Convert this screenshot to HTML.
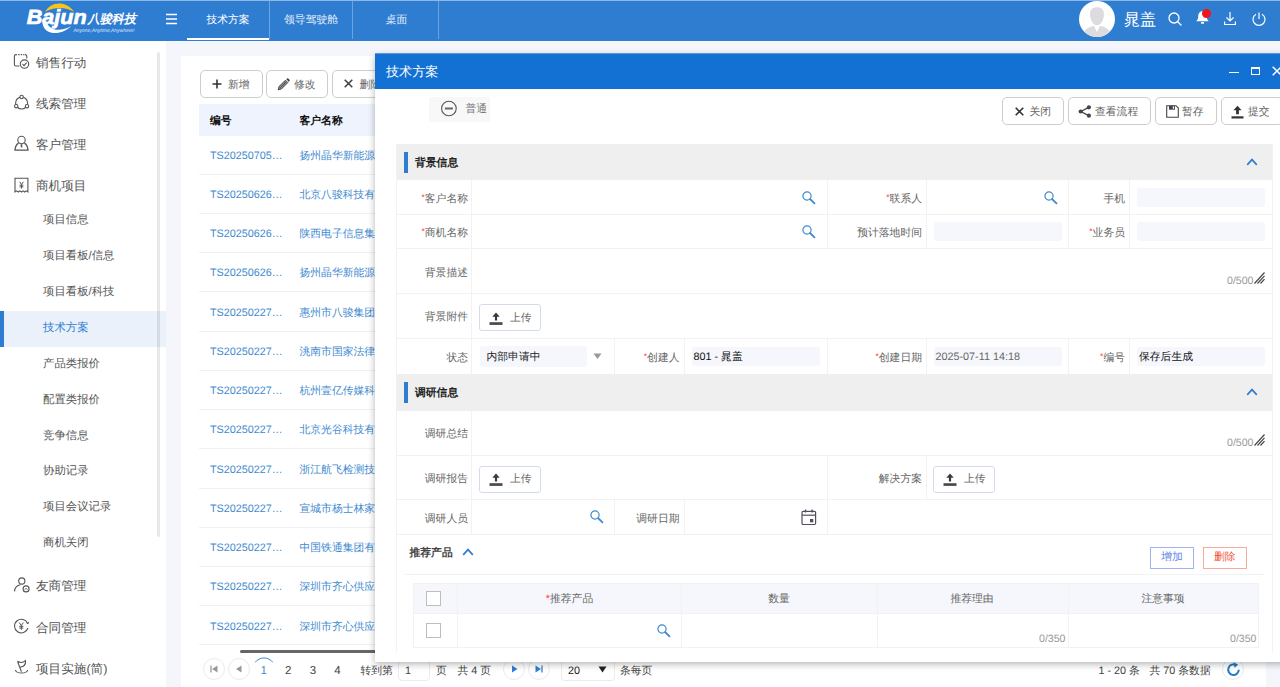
<!DOCTYPE html>
<html><head><meta charset="utf-8">
<style>
*{box-sizing:border-box;margin:0;padding:0}
html,body{text-rendering:geometricPrecision;width:1280px;height:687px;overflow:hidden;background:#f4f6fc;font-family:"Liberation Sans",sans-serif;font-size:12px;color:#555}
.abs{position:absolute}
#hdr{position:absolute;left:0;top:0;width:1280px;height:41px;background:#2f7dd1;border-top:1px solid #8db7e6}
.tab{position:absolute;top:0;height:38px;line-height:38px;text-align:center;color:#fff;font-size:10.8px;border-right:1px solid #6fa3dc}
#side{position:absolute;left:0;top:41px;width:166px;height:646px;background:#fff}
.m1{position:absolute;left:36px;font-size:12.6px;color:#555;white-space:nowrap;height:20px;line-height:20px}
.m2{position:absolute;left:43px;font-size:11.4px;color:#555;white-space:nowrap;height:20px;line-height:20px}
.ico{position:absolute;left:13px}
#card{position:absolute;left:181px;top:56px;width:1085px;height:640px;background:#fff}
.btn{position:absolute;height:28px;border:1px solid #cdcdcd;border-radius:5px;background:#fff;color:#666;font-size:10.8px;line-height:28px;white-space:nowrap}
.th{position:absolute;font-weight:bold;color:#111;font-size:10.8px;top:114.2px;line-height:14px;white-space:nowrap}
.row{position:absolute;left:199px;width:1081px;height:39.23px;border-bottom:1px solid #f0f1f4}
.row span{position:absolute;top:13.3px;line-height:15px;color:#3f8bd0;font-size:10.8px;white-space:nowrap}
#modal{position:absolute;left:375px;top:54px;width:920px;height:608px;background:#fff;box-shadow:0 2px 7px rgba(0,0,0,.3)}
#mtitle{position:absolute;left:0;top:0;width:100%;height:36px;background:#1371d4;color:#fff;font-size:13.5px;line-height:36px;padding-left:10px}
.sec{position:absolute;left:21px;width:875px;height:36px;background:#efefef;font-weight:bold;color:#222;font-size:11.5px;line-height:36px;padding-left:18px}
.sec:before{content:"";position:absolute;left:7px;top:7px;width:4px;height:22px;background:#2f7dd1}
.hl{position:absolute;left:21px;width:875px;height:1px;background:#ececec}
.vl{position:absolute;width:1px;background:#ececec}
.lb{position:absolute;text-align:right;color:#666;font-size:10.8px;line-height:16px;white-space:nowrap}
.lb i{color:#f33;font-style:normal;font-size:8.5px;position:relative;top:-2px}
.inp{position:absolute;height:19px;background:#f5f7fd;border-radius:3px;font-size:10.8px;color:#222;line-height:21px;padding-left:2px;white-space:nowrap}
</style></head><body>
<div id="hdr">
<svg class="abs" style="left:0;top:-1px" width="160" height="41" viewBox="0 0 160 41">
<path d="M45 12 C50 3 64 -1.200 74.300 11.800 C65 6.200 53 7 45 12 Z" fill="#f9c416"/>
<path d="M42.5 23.2 C44 35.5 62 36 71 26 C62 31.5 51 31.5 47 23.2 Z" fill="#fff"/>
<text x="26.700" y="23.500" font-family="Liberation Sans" font-weight="bold" font-style="italic" font-size="20.500" fill="#fff" stroke="#fff" stroke-width="0.7" textLength="60" lengthAdjust="spacingAndGlyphs">Bajun</text>
<text x="87.500" y="23" font-family="Liberation Sans, sans-serif" font-weight="bold" font-style="italic" font-size="12.500" fill="#fff" textLength="48.500" lengthAdjust="spacingAndGlyphs">八骏科技</text>
<text x="73.5" y="32" font-family="Liberation Sans" font-style="italic" font-size="5" fill="#dbe8f7" textLength="61" lengthAdjust="spacingAndGlyphs">Anyone,Anytime,Anywhere!</text>
</svg>
<svg class="abs" style="left:165px;top:12px" width="13" height="12" viewBox="0 0 13 12"><path d="M1 1.5h11M1 6h11M1 10.5h11" stroke="#fff" stroke-width="1.4" fill="none"/></svg>
<div class="tab" style="left:187px;width:83px;border-bottom:0">技术方案</div>
<div class="abs" style="left:187px;top:37px;width:82px;height:2px;background:#fff"></div>
<div class="tab" style="left:270px;width:83px;color:#e6effa">领导驾驶舱</div>
<div class="tab" style="left:353px;width:86px;color:#e6effa;padding-left:2px">桌面</div>
<div class="abs" style="left:1078.6px;top:0px;width:36px;height:36px;border-radius:50%;background:#fff;overflow:hidden">
<svg width="36" height="36" viewBox="0 0 36 36"><path d="M18 6.300c4.400 0 7 2.600 7 7 0 4.500-2.600 11-7 11s-7-6.500-7-11c0-4.400 2.600-7 7-7z" fill="#dcdbe0"/><path d="M4 36c.5-8 5-10.500 14-11.500 9 1 13.500 3.500 14 11.500z" fill="#dcdbe0"/><path d="M14.600 24.200L18 31l3.400-6.800z" fill="#fff"/></svg></div>
<div class="abs" style="left:1124px;top:8.7px;color:#fff;font-size:16.100px;line-height:20px">晁盖</div>
<svg class="abs" style="left:1166.5px;top:10.3px" width="16" height="16" viewBox="0 0 16 16"><circle cx="7" cy="7" r="5" stroke="#fff" stroke-width="1.3" fill="none"/><path d="M10.7 10.7L14 14" stroke="#fff" stroke-width="1.3" stroke-linecap="round"/></svg>
<svg class="abs" style="left:1193.5px;top:8.2px" width="17" height="17" viewBox="0 0 16 16"><path d="M8 2 C5 2 4 4.5 4 7 C4 9.5 3 10.5 2 11.5 L14 11.5 C13 10.5 12 9.5 12 7 C12 4.5 11 2 8 2 Z" fill="#fff"/><rect x="6.5" y="12.3" width="3" height="1.5" rx=".7" fill="#fff"/></svg>
<div class="abs" style="left:1201.600px;top:7.700px;width:9px;height:9px;border-radius:50%;background:#f0151c"></div>
<svg class="abs" style="left:1222px;top:9.3px" width="16" height="16" viewBox="0 0 16 16"><path d="M8 2V11M4.500 7.500L8 11L11.500 7.500M2.600 11.500V14.500H13.400V11.500" stroke="#fff" stroke-width="1.2" fill="none"/></svg>
<svg class="abs" style="left:1251px;top:9.5px" width="16" height="16" viewBox="0 0 16 16"><path d="M5 3.2A6 6 0 1 0 11 3.2" stroke="#fff" stroke-width="1.2" fill="none"/><path d="M8 1.5V8" stroke="#fff" stroke-width="1.2"/></svg>
</div>
<div id="side"><div class="abs" style="left:0;top:-41px;width:166px;height:687px">
<div class="abs" style="left:0;top:311px;width:166px;height:35.5px;background:#eaf1fb"></div><div class="abs" style="left:0;top:311px;width:4px;height:35.5px;background:#2f7dd1"></div>
<div class="abs" style="left:157px;top:52px;width:3px;height:485px;background:rgba(0,0,0,.09);border-radius:2px"></div>
<div class="m1" style="top:52.6px">销售行动</div>
<div class="m1" style="top:93.6px">线索管理</div>
<div class="m1" style="top:135.0px">客户管理</div>
<div class="m1" style="top:176.0px">商机项目</div>
<div class="m1" style="top:576.0px">友商管理</div>
<div class="m1" style="top:617.6px">合同管理</div>
<div class="m1" style="top:658.6px">项目实施(简)</div>
<div class="m2" style="top:210.30px">项目信息</div>
<div class="m2" style="top:246.17px">项目看板/信息</div>
<div class="m2" style="top:282.04px">项目看板/科技</div>
<div class="m2" style="top:317.91px;color:#2f7dd1">技术方案</div>
<div class="m2" style="top:353.78px">产品类报价</div>
<div class="m2" style="top:389.65px">配置类报价</div>
<div class="m2" style="top:425.52px">竞争信息</div>
<div class="m2" style="top:461.39px">协助记录</div>
<div class="m2" style="top:497.26px">项目会议记录</div>
<div class="m2" style="top:533.13px">商机关闭</div>
<svg class="abs" style="left:0;top:0" width="40" height="687" viewBox="0 0 40 687" fill="none" stroke="#555" stroke-width="1.1">
<!-- 1 doc+check -->
<path d="M19.5 66H16a1.6 1.6 0 0 1-1.6-1.6V56.2a1.6 1.6 0 0 1 1.6-1.6h1M26.8 58.5V56.2a1.6 1.6 0 0 0-1.6-1.6h-.6"/>
<path d="M18.2 54.6h1.4M20.8 54.6h1.4M23.2 54.6h.8"/>
<circle cx="24.5" cy="64.1" r="4.2"/><path d="M22.5 64.1l1.5 1.5 2.6-3"/>
<!-- 2 ring nodes -->
<circle cx="21.6" cy="103" r="6"/>
<circle cx="21.6" cy="97" r="1.7" fill="#fff"/><circle cx="16.2" cy="106.2" r="1.7" fill="#fff"/><circle cx="27" cy="106.2" r="1.7" fill="#fff"/>
<!-- 3 person -->
<circle cx="21.5" cy="140" r="3.7"/>
<path d="M18.6 143.2c-2.6 1.2-3.3 3.6-3.6 6.9h13c-.3-3.3-1-5.700-3.600-6.900" stroke-width="1.3"/>
<path d="M21.500 144.200v3.200" stroke-width="1.600"/>
<!-- 4 receipt -->
<path d="M15 192V178.300h12.900V192l-1.600-1.100-1.600 1.100-1.600-1.100-1.600 1.100-1.700-1.100-1.600 1.100-1.600-1.100z"/>
<path d="M19.700 181.800l1.800 2.700 1.800-2.700M21.500 184.500v4M19.600 185.200h3.800M19.600 186.900h3.800" stroke-width="1"/>
<!-- 5 person+badge -->
<circle cx="21.800" cy="581" r="3.100"/>
<path d="M14.500 591.400c.3-3.600 2.500-6 6-6.600"/>
<circle cx="26.100" cy="588.900" r="3"/><path d="M24.700 589.600a1.500 1.500 0 0 1 2.800 0" stroke-width=".9"/>
<!-- 6 yen circle -->
<path d="M27.700 623.600A6.800 6.800 0 1 0 27.900 628"/>
<path d="M26.400 622.600l1.600 1.300 .5-2" stroke-width="1"/>
<path d="M19.300 622.600l2 3 2-3M21.300 625.600v4.200M19.300 626.300h4M19.300 628h4" stroke-width="1"/>
<!-- 7 flag -->
<path d="M17.500 661.300l3.900 10.500M17.500 661.300c2.500 1.600 5.500 1.500 8-.6c.3 3.500-1.700 6-5.300 6.500"/>
<path d="M15.400 670c.8 4 11.500 4 12.300 0"/>
</svg>
</div></div>
<div id="card"><div class="abs" style="left:-181px;top:-56px;width:1280px;height:687px">
<div class="btn" style="left:200px;top:70px;width:62.5px"><svg class="abs" style="left:11.2px;top:8px" width="10" height="10" viewBox="0 0 10 10"><path d="M5 .5v9M.5 5h9" stroke="#333" stroke-width="1.600"/></svg><span class="abs" style="left:27px">新增</span></div>
<div class="btn" style="left:266px;top:70px;width:62px"><svg class="abs" style="left:10px;top:7px" width="13" height="13" viewBox="0 0 13 13"><path d="M1.200 11.800l.9-3.300 6.300-6.300 2.400 2.400-6.300 6.300z" fill="#8a8a8a" stroke="#3c3c3c" stroke-width=".9" stroke-linejoin="round"/><path d="M3.400 9.600l5.600-5.600" stroke="#3c3c3c" stroke-width=".7"/><path d="M9.300 1.300l.8-.8a.8.8 0 0 1 1.100 0l1.300 1.300a.8.8 0 0 1 0 1.100l-.8.8z" fill="#3c3c3c"/></svg><span class="abs" style="left:27px">修改</span></div>
<div class="btn" style="left:331.500px;top:70px;width:62px"><svg class="abs" style="left:11.200px;top:8px" width="9" height="9" viewBox="0 0 9 9"><path d="M.7.7l7.600 7.600M8.300.7l-7.600 7.600" stroke="#444" stroke-width="1.600"/></svg><span class="abs" style="left:27px">删除</span></div>
<div class="abs" style="left:199px;top:104px;width:1081px;height:31.500px;background:#eef3fd"></div>
<div class="th" style="left:210px">编号</div><div class="th" style="left:299.500px">客户名称</div>
<div class="row" style="top:135.50px"><span style="left:11px">TS20250705…</span><span style="left:100.500px">扬州晶华新能源</span></div>
<div class="row" style="top:174.73px"><span style="left:11px">TS20250626…</span><span style="left:100.500px">北京八骏科技有限</span></div>
<div class="row" style="top:213.96px"><span style="left:11px">TS20250626…</span><span style="left:100.500px">陕西电子信息集团</span></div>
<div class="row" style="top:253.19px"><span style="left:11px">TS20250626…</span><span style="left:100.500px">扬州晶华新能源</span></div>
<div class="row" style="top:292.42px"><span style="left:11px">TS20250227…</span><span style="left:100.500px">惠州市八骏集团</span></div>
<div class="row" style="top:331.65px"><span style="left:11px">TS20250227…</span><span style="left:100.500px">洮南市国家法律</span></div>
<div class="row" style="top:370.88px"><span style="left:11px">TS20250227…</span><span style="left:100.500px">杭州壹亿传媒科技</span></div>
<div class="row" style="top:410.11px"><span style="left:11px">TS20250227…</span><span style="left:100.500px">北京光谷科技有限</span></div>
<div class="row" style="top:449.34px"><span style="left:11px">TS20250227…</span><span style="left:100.500px">浙江航飞检测技术</span></div>
<div class="row" style="top:488.57px"><span style="left:11px">TS20250227…</span><span style="left:100.500px">宣城市杨士林家</span></div>
<div class="row" style="top:527.80px"><span style="left:11px">TS20250227…</span><span style="left:100.500px">中国铁通集团有限</span></div>
<div class="row" style="top:567.03px"><span style="left:11px">TS20250227…</span><span style="left:100.500px">深圳市齐心供应链</span></div>
<div class="row" style="top:606.26px"><span style="left:11px">TS20250227…</span><span style="left:100.500px">深圳市齐心供应链</span></div>

<div class="abs" style="left:240px;top:649.500px;width:700px;height:3px;background:#666;border-radius:2px"></div>
<div id="pg" style="position:absolute;left:0;top:0;font-size:10.8px;color:#555">
<style>.pc{position:absolute;width:22px;height:22px;border:1px solid #ebebeb;border-radius:50%;top:658.3px}.pt{position:absolute;top:663.7px;line-height:15px;white-space:nowrap;color:#444}</style>
<div class="pc" style="left:202.800px"><svg class="abs" style="left:6px;top:6px" width="8" height="8" viewBox="0 0 8 8"><path d="M1 .5v7" stroke="#999" stroke-width="1.300"/><path d="M7.500 .5v7L2 4z" fill="#999"/></svg></div>
<div class="pc" style="left:228.300px"><svg class="abs" style="left:6px;top:6px" width="8" height="8" viewBox="0 0 8 8"><path d="M6.500 .5v7L1 4z" fill="#999"/></svg></div>
<svg class="abs" style="left:250px;top:656.2px" width="28" height="10" viewBox="0 0 28 10"><path d="M5.200 6.300A11 11 0 0 1 22.800 6.300" stroke="#3d8bd0" stroke-width="1" fill="none"/></svg>
<div class="pt" style="left:260.500px;color:#3d8bd0;font-size:11.500px">1</div>
<div class="pt" style="left:285px;font-size:11.500px">2</div>
<div class="pt" style="left:309.700px;font-size:11.500px">3</div>
<div class="pt" style="left:334.300px;font-size:11.500px">4</div>
<div class="pt" style="left:360.500px">转到第</div>
<div class="abs" style="left:398px;top:658.500px;width:32px;height:22px;border:1px solid #ececec;border-radius:4px;background:#fff"></div>
<div class="pt" style="left:405px">1</div>
<div class="pt" style="left:436px">页</div>
<div class="pt" style="left:457.500px">共 4 页</div>
<div class="pc" style="left:502.800px"><svg class="abs" style="left:7px;top:6px" width="8" height="8" viewBox="0 0 8 8"><path d="M1 .5v7L6.500 4z" fill="#2f7dd1"/></svg></div>
<div class="pc" style="left:527.500px"><svg class="abs" style="left:6px;top:6px" width="8" height="8" viewBox="0 0 8 8"><path d="M.5 .5v7L6 4z" fill="#2f7dd1"/><path d="M7 .5v7" stroke="#2f7dd1" stroke-width="1.300"/></svg></div>
<div class="abs" style="left:560.500px;top:658.500px;width:54px;height:22px;border:1px solid #ececec;border-radius:4px;background:#fff"></div>
<div class="pt" style="left:568px;color:#222">20</div>
<svg class="abs" style="left:598px;top:666px" width="9" height="7" viewBox="0 0 9 7"><path d="M.5 .5h8L4.500 6.500z" fill="#222"/></svg>
<div class="pt" style="left:620px">条每页</div>
<div class="pt" style="left:1098.500px">1 - 20 条</div>
<div class="pt" style="left:1149.500px">共 70 条数据</div>
<div class="pc" style="left:1222px"><svg class="abs" style="left:3px;top:3px" width="15" height="15" viewBox="0 0 15 15"><path d="M10.600 3.400A5.300 5.300 0 1 0 12.800 7.800" stroke="#1f7dcb" stroke-width="2" fill="none"/><path d="M7.600 .3l4.600 2.400-3.700 3z" fill="#1f7dcb"/></svg></div>
</div>
</div></div>
<div id="modal"><div class="abs" id="mw" style="left:-375px;top:-54px;width:1300px;height:687px">
<div class="abs" style="left:375px;top:54px;width:920px;height:35px;background:#1371d4"></div>
<div class="abs" style="left:375px;top:53px;width:920px;height:1px;background:#5c9be0"></div>
<div class="abs" style="left:386px;top:62.700px;color:#fff;font-size:13.100px;line-height:18px">技术方案</div>
<div class="abs" style="left:1229px;top:71.500px;width:9.500px;height:1.500px;background:#fff"></div>
<div class="abs" style="left:1250.500px;top:66.500px;width:9.500px;height:8.500px;border:1px solid #fff;border-top-width:2.500px"></div>
<svg class="abs" style="left:1272px;top:66px" width="10" height="10" viewBox="0 0 10 10"><path d="M.7.7l8.600 8.600M9.300.7l-8.600 8.600" stroke="#fff" stroke-width="1.500"/></svg>
<div class="abs" style="left:429px;top:97px;width:61px;height:25px;background:#f8f8f9"></div>
<svg class="abs" style="left:440px;top:100px" width="17" height="17" viewBox="0 0 17 17"><circle cx="8.900" cy="8.500" r="7.300" stroke="#555" stroke-width="1.100" fill="none"/><path d="M4.900 8.500h8" stroke="#666" stroke-width="2"/></svg>
<div class="abs" style="left:465.500px;top:102.200px;color:#777;font-size:10.800px;line-height:15px">普通</div>
<div class="btn" style="left:1002px;top:97px;width:62px;height:27.500px"><svg class="abs" style="left:12px;top:8.500px" width="9" height="9" viewBox="0 0 9 9"><path d="M.7.7l7.600 7.600M8.300.7l-7.600 7.600" stroke="#333" stroke-width="1.600"/></svg><span class="abs" style="left:26.5px;top:0">关闭</span></div>
<div class="btn" style="left:1067.5px;top:97px;width:83.5px;height:27.500px"><svg class="abs" style="left:9.500px;top:7px" width="14" height="13" viewBox="0 0 14 13"><path d="M10.800 2.300L2.800 6.500l8 4.200" stroke="#444" stroke-width="1.300" fill="none"/><circle cx="10.900" cy="2.300" r="2.100" fill="#444"/><circle cx="2.700" cy="6.500" r="2.100" fill="#444"/><circle cx="10.900" cy="10.700" r="2.100" fill="#444"/></svg><span class="abs" style="left:26.5px;top:0">查看流程</span></div>
<div class="btn" style="left:1154.5px;top:97px;width:62px;height:27.500px"><svg class="abs" style="left:10px;top:7px" width="13" height="13" viewBox="0 0 13 13"><path d="M.7.7h9.300l2.300 2.300v9.300H.7z" stroke="#444" stroke-width="1.100" fill="none"/><path d="M3 .7h6v4H3z" fill="#444"/><path d="M6.800 1.400h1.300v2.400H6.800z" fill="#fff"/></svg><span class="abs" style="left:26.5px;top:0">暂存</span></div>
<div class="btn" style="left:1220.5px;top:97px;width:62px;height:27.500px"><svg class="abs" style="left:9.500px;top:6.500px" width="13" height="14" viewBox="0 0 13 14"><path d="M6.500 .8L2.400 5.200h2.700v4h2.800v-4h2.700z" fill="#333"/><path d="M.5 11.300h12v2.200H.5z" fill="#333"/></svg><span class="abs" style="left:26.5px;top:0">提交</span></div>
<div class="abs" style="left:397px;top:144px;width:875px;height:36px;background:#efefef"></div>
<div class="abs" style="left:404.300px;top:151.5px;width:3.500px;height:21px;background:#2f7dd1"></div>
<div class="abs" style="left:415px;top:155.6px;font-weight:bold;color:#222;font-size:10.800px;line-height:15px">背景信息</div>
<svg class="abs" style="left:1246px;top:157.8px" width="12" height="8" viewBox="0 0 12 8"><path d="M1.200 6.800L6 1.600l4.800 5.200" stroke="#2f7dd1" stroke-width="1.700" fill="none"/></svg>
<div class="abs" style="left:397px;top:374px;width:875px;height:37px;background:#efefef"></div>
<div class="abs" style="left:404.300px;top:381.5px;width:3.500px;height:21px;background:#2f7dd1"></div>
<div class="abs" style="left:415px;top:385.6px;font-weight:bold;color:#222;font-size:10.800px;line-height:15px">调研信息</div>
<svg class="abs" style="left:1246px;top:387.8px" width="12" height="8" viewBox="0 0 12 8"><path d="M1.200 6.800L6 1.600l4.800 5.200" stroke="#2f7dd1" stroke-width="1.700" fill="none"/></svg>
<div class="abs" style="left:397px;top:214px;width:875px;height:1px;background:#f2f2f2"></div>
<div class="abs" style="left:397px;top:248px;width:875px;height:1px;background:#f2f2f2"></div>
<div class="abs" style="left:397px;top:293px;width:875px;height:1px;background:#f2f2f2"></div>
<div class="abs" style="left:397px;top:337.5px;width:875px;height:1px;background:#f2f2f2"></div>
<div class="abs" style="left:397px;top:455px;width:875px;height:1px;background:#f2f2f2"></div>
<div class="abs" style="left:397px;top:499px;width:875px;height:1px;background:#f2f2f2"></div>
<div class="abs" style="left:397px;top:534px;width:875px;height:1px;background:#f2f2f2"></div>
<div class="abs" style="left:396px;top:144px;width:1px;height:508px;background:#f2f2f2"></div>
<div class="abs" style="left:1272px;top:144px;width:1px;height:508px;background:#f2f2f2"></div>
<div class="abs" style="left:471px;top:180px;width:1px;height:194px;background:#f2f2f2"></div>
<div class="abs" style="left:471px;top:411px;width:1px;height:123px;background:#f2f2f2"></div>
<div class="abs" style="left:827px;top:180px;width:1px;height:68px;background:#f2f2f2"></div>
<div class="abs" style="left:827px;top:338px;width:1px;height:36px;background:#f2f2f2"></div>
<div class="abs" style="left:926px;top:180px;width:1px;height:68px;background:#f2f2f2"></div>
<div class="abs" style="left:926px;top:338px;width:1px;height:36px;background:#f2f2f2"></div>
<div class="abs" style="left:1068px;top:180px;width:1px;height:68px;background:#f2f2f2"></div>
<div class="abs" style="left:1068px;top:338px;width:1px;height:36px;background:#f2f2f2"></div>
<div class="abs" style="left:1129px;top:180px;width:1px;height:68px;background:#f2f2f2"></div>
<div class="abs" style="left:1129px;top:338px;width:1px;height:36px;background:#f2f2f2"></div>
<div class="abs" style="left:614px;top:338px;width:1px;height:36px;background:#f2f2f2"></div>
<div class="abs" style="left:684px;top:338px;width:1px;height:36px;background:#f2f2f2"></div>
<div class="abs" style="left:827px;top:455px;width:1px;height:79px;background:#f2f2f2"></div>
<div class="abs" style="left:926px;top:455px;width:1px;height:44px;background:#f2f2f2"></div>
<div class="abs" style="left:614px;top:499px;width:1px;height:35px;background:#f2f2f2"></div>
<div class="abs" style="left:684px;top:499px;width:1px;height:35px;background:#f2f2f2"></div>
<div class="lb" style="right:832px;top:190.5px"><i>*</i>客户名称</div>
<svg class="abs" style="left:801px;top:189.8px" width="16" height="16" viewBox="0 0 16 16"><circle cx="6" cy="6" r="4.100" stroke="#3d8bd0" stroke-width="1.200" fill="none"/><path d="M9 9l4.500 4.300" stroke="#3d8bd0" stroke-width="1.800" stroke-linecap="round"/></svg>
<div class="lb" style="right:378px;top:190.5px"><i>*</i>联系人</div>
<svg class="abs" style="left:1043px;top:189.8px" width="16" height="16" viewBox="0 0 16 16"><circle cx="6" cy="6" r="4.100" stroke="#3d8bd0" stroke-width="1.200" fill="none"/><path d="M9 9l4.500 4.300" stroke="#3d8bd0" stroke-width="1.800" stroke-linecap="round"/></svg>
<div class="lb" style="right:175px;top:190.5px">手机</div>
<div class="inp" style="left:1137px;top:188.0px;width:128px;color:#222"></div>
<div class="lb" style="right:832px;top:224.5px"><i>*</i>商机名称</div>
<svg class="abs" style="left:801px;top:224.0px" width="16" height="16" viewBox="0 0 16 16"><circle cx="6" cy="6" r="4.100" stroke="#3d8bd0" stroke-width="1.200" fill="none"/><path d="M9 9l4.500 4.300" stroke="#3d8bd0" stroke-width="1.800" stroke-linecap="round"/></svg>
<div class="lb" style="right:378px;top:224.5px">预计落地时间</div>
<div class="inp" style="left:933.5px;top:222.0px;width:128.0px;color:#222"></div>
<div class="lb" style="right:175px;top:224.5px"><i>*</i>业务员</div>
<div class="inp" style="left:1137px;top:222.0px;width:128px;color:#222"></div>
<div class="lb" style="right:832px;top:265px">背景描述</div>
<div class="abs" style="right:46.5px;top:274.0px;font-size:10.600px;line-height:15px;color:#999">0/500</div>
<svg class="abs" style="left:1254px;top:272px" width="11" height="12" viewBox="0 0 11 12"><path d="M.5 11.500L10.500 .5M3.500 11.500L10.500 3.800M6.500 11.500L10.500 7.200" stroke="#444" stroke-width="1.150"/></svg>
<div class="lb" style="right:832px;top:309px">背景附件</div>
<div class="abs" style="left:479.0px;top:304.0px;width:62px;height:27px;border:1px solid #d3dbed;border-radius:3px;background:#fff"><svg class="abs" style="left:9px;top:6.500px" width="14" height="14" viewBox="0 0 14 14"><path d="M7 .6L3.300 4.700h2.600v3.800h2.200v-3.800h2.600z" fill="#3a3a3a"/><path d="M.5 10.200h13v2.700H.5z" fill="#4a4a4a"/></svg><span class="abs" style="left:30px;top:5.500px;font-size:10.800px;line-height:15px;color:#666">上传</span></div>
<div class="lb" style="right:832px;top:349.5px">状态</div>
<div class="inp" style="left:480px;top:345.500px;width:106.500px;height:21px;line-height:23px;padding-left:6.500px;color:#222">内部申请中</div>
<svg class="abs" style="left:592.500px;top:353px" width="9" height="7" viewBox="0 0 9 7"><path d="M.5 .5h8L4.500 6z" fill="#999"/></svg>
<div class="lb" style="right:620.5px;top:349.5px"><i>*</i>创建人</div>
<div class="inp" style="left:691.5px;top:347.0px;width:128.0px;color:#111">801 - 晁盖</div>
<div class="lb" style="right:378px;top:349.5px"><i>*</i>创建日期</div>
<div class="inp" style="left:933.5px;top:347.0px;width:128.0px;color:#666">2025-07-11 14:18</div>
<div class="lb" style="right:175px;top:349.5px"><i>*</i>编号</div>
<div class="inp" style="left:1137px;top:347.0px;width:128px;color:#111">保存后生成</div>
<div class="lb" style="right:832px;top:426px">调研总结</div>
<div class="abs" style="right:46.5px;top:435.8px;font-size:10.600px;line-height:15px;color:#999">0/500</div>
<svg class="abs" style="left:1254px;top:434px" width="11" height="12" viewBox="0 0 11 12"><path d="M.5 11.500L10.500 .5M3.500 11.500L10.500 3.800M6.500 11.500L10.500 7.200" stroke="#444" stroke-width="1.150"/></svg>
<div class="lb" style="right:832px;top:471px">调研报告</div>
<div class="abs" style="left:479.0px;top:465.8px;width:62px;height:27px;border:1px solid #d3dbed;border-radius:3px;background:#fff"><svg class="abs" style="left:9px;top:6.500px" width="14" height="14" viewBox="0 0 14 14"><path d="M7 .6L3.300 4.700h2.600v3.800h2.200v-3.800h2.600z" fill="#3a3a3a"/><path d="M.5 10.200h13v2.700H.5z" fill="#4a4a4a"/></svg><span class="abs" style="left:30px;top:5.500px;font-size:10.800px;line-height:15px;color:#666">上传</span></div>
<div class="lb" style="right:378px;top:471px">解决方案</div>
<div class="abs" style="left:933.0px;top:465.8px;width:62px;height:27px;border:1px solid #d3dbed;border-radius:3px;background:#fff"><svg class="abs" style="left:9px;top:6.500px" width="14" height="14" viewBox="0 0 14 14"><path d="M7 .6L3.300 4.700h2.600v3.800h2.200v-3.800h2.600z" fill="#3a3a3a"/><path d="M.5 10.200h13v2.700H.5z" fill="#4a4a4a"/></svg><span class="abs" style="left:30px;top:5.500px;font-size:10.800px;line-height:15px;color:#666">上传</span></div>
<div class="lb" style="right:832px;top:510.5px">调研人员</div>
<svg class="abs" style="left:588.5px;top:509.3px" width="16" height="16" viewBox="0 0 16 16"><circle cx="6" cy="6" r="4.100" stroke="#3d8bd0" stroke-width="1.200" fill="none"/><path d="M9 9l4.500 4.300" stroke="#3d8bd0" stroke-width="1.800" stroke-linecap="round"/></svg>
<div class="lb" style="right:620.5px;top:510.5px">调研日期</div>
<svg class="abs" style="left:800.500px;top:509px" width="16" height="17" viewBox="0 0 16 17"><rect x="1" y="2.300" width="13.600" height="13.200" rx="1.200" stroke="#554c5c" stroke-width="1.200" fill="none"/><path d="M1 6.200h13.600" stroke="#554c5c" stroke-width="1.200"/><path d="M4.500 .6v3M11 .6v3" stroke="#554c5c" stroke-width="1.400"/><rect x="9" y="10" width="3.300" height="3.300" fill="#554c5c"/></svg>
<div class="abs" style="left:409.500px;top:545.700px;font-weight:bold;color:#444;font-size:10.800px;line-height:15px">推荐产品</div>
<svg class="abs" style="left:462px;top:548px" width="12" height="8" viewBox="0 0 12 8"><path d="M1.200 6.800L6 1.600l4.800 5.200" stroke="#2f7dd1" stroke-width="1.700" fill="none"/></svg>
<div class="abs" style="left:404.5px;top:574px;width:860.5px;height:1px;background:#f2f2f2"></div>
<div class="abs" style="left:1150px;top:547px;width:44px;height:21.500px;border:1px solid #9db3f3;color:#5b82ea;font-size:10.800px;line-height:19px;text-align:center">增加</div>
<div class="abs" style="left:1202.500px;top:547px;width:44.500px;height:21.500px;border:1px solid #f6ab9c;color:#f0553c;font-size:10.800px;line-height:19px;text-align:center">删除</div>
<div class="abs" style="left:413px;top:583px;width:846px;height:30px;background:#f5f7fc"></div>
<div class="abs" style="left:413px;top:583px;width:846px;height:1px;background:#f2f2f2"></div>
<div class="abs" style="left:413px;top:613px;width:846px;height:1px;background:#f2f2f2"></div>
<div class="abs" style="left:413px;top:646.5px;width:846px;height:1px;background:#f2f2f2"></div>
<div class="abs" style="left:412.8px;top:583px;width:1px;height:64px;background:#f2f2f2"></div>
<div class="abs" style="left:456.8px;top:583px;width:1px;height:64px;background:#f2f2f2"></div>
<div class="abs" style="left:681.3px;top:583px;width:1px;height:64px;background:#f2f2f2"></div>
<div class="abs" style="left:876.5px;top:583px;width:1px;height:64px;background:#f2f2f2"></div>
<div class="abs" style="left:1068px;top:583px;width:1px;height:64px;background:#f2f2f2"></div>
<div class="abs" style="left:1258px;top:583px;width:1px;height:64px;background:#f2f2f2"></div>
<div class="abs" style="left:426px;top:591px;width:14.500px;height:14.500px;border:1px solid #bdbdbd;background:#fff"></div>
<div class="abs" style="left:426px;top:623px;width:14.500px;height:14.500px;border:1px solid #bdbdbd;background:#fff"></div>
<div class="abs" style="left:509.5px;width:120px;text-align:center;top:592px;font-size:10.800px;line-height:15px;color:#666"><i style="color:#f33;font-style:normal">*</i>推荐产品</div>
<div class="abs" style="left:719px;width:120px;text-align:center;top:592px;font-size:10.800px;line-height:15px;color:#666">数量</div>
<div class="abs" style="left:912px;width:120px;text-align:center;top:592px;font-size:10.800px;line-height:15px;color:#666">推荐理由</div>
<div class="abs" style="left:1103px;width:120px;text-align:center;top:592px;font-size:10.800px;line-height:15px;color:#666">注意事项</div>
<svg class="abs" style="left:655.5px;top:622.8px" width="16" height="16" viewBox="0 0 16 16"><circle cx="6" cy="6" r="4.100" stroke="#3d8bd0" stroke-width="1.200" fill="none"/><path d="M9 9l4.500 4.300" stroke="#3d8bd0" stroke-width="1.800" stroke-linecap="round"/></svg>
<div class="abs" style="right:234.5px;top:632.0px;font-size:10.600px;line-height:15px;color:#999">0/350</div>
<div class="abs" style="right:43.5px;top:632.0px;font-size:10.600px;line-height:15px;color:#999">0/350</div>
</div></div>
</body></html>
